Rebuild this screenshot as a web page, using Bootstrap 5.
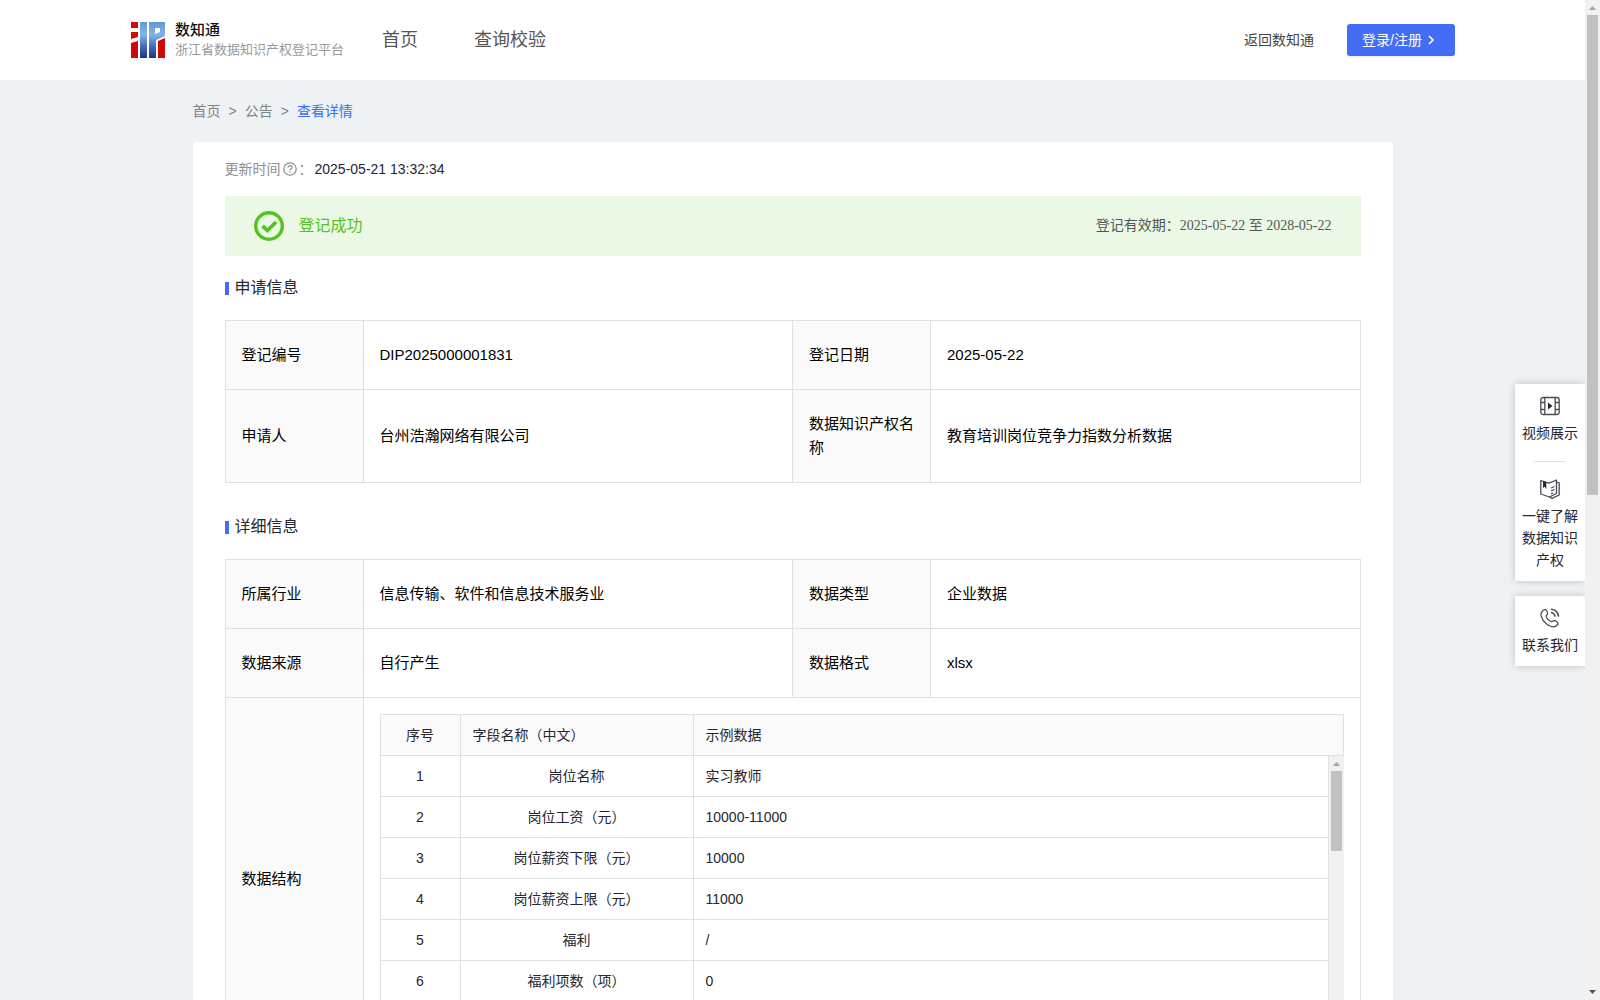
<!DOCTYPE html>
<html lang="zh-CN">
<head>
<meta charset="utf-8">
<meta name="viewport" content="width=device-width, initial-scale=1">
<title>数知通 - 查看详情</title>
<link href="https://cdn.jsdelivr.net/npm/bootstrap@5.3.0/dist/css/bootstrap.min.css" rel="stylesheet">
<style>
  body { font: 14px/22px "Liberation Sans", "Noto Sans CJK SC", sans-serif; color: #252632; background: #eef2f5; }
  a { text-decoration: none; }
  .page-scroll { overflow-y: auto; scrollbar-width: none; min-width: 0; }
  .page-scroll::-webkit-scrollbar, .rows-scroll::-webkit-scrollbar { display: none; }

  /* scroll bars */
  .sbar { width: 15px; background: #f1f1f1; flex: none; }
  .sbar svg { display: block; width: 15px; height: 15px; flex: none; }
  .sbar-thumb { width: 11px; background: #c1c1c1; margin: 0 2px; }
  .sbar-page .sbar-thumb { height: 48%; }
  .sbar-rows .sbar-thumb { height: 28%; }

  /* header */
  .topbar { height: 80px; background: #fff; }
  .topbar-inner { max-width: 1325px; }
  .brand { gap: 10px; }
  .brand-logo { width: 35px; height: 36px; }
  .brand-name { font-size: 15px; line-height: 20px; font-weight: 500; color: #111; }
  .brand-sub { font-size: 13px; line-height: 20px; color: #999; }
  .topnav { gap: 56px; margin-left: 38px; }
  .topnav a { font-size: 18px; line-height: 26px; color: #555; }
  .back-link { color: #444; margin-right: 33px; }
  .btn-login { background: #446df5; color: #fff; font-size: 14px; line-height: 22px; width: 108px; height: 32px; padding: 0 15px; border: 0; border-radius: 3px; box-shadow: 0 2px 0 rgba(0,0,0,.05); }
  .btn-login:hover { background: #3059e0; color: #fff; }

  /* breadcrumb and panel */
  .content-wrap { max-width: 1200px; }
  .crumbs { gap: 8px; padding: 20px 0; color: #808285; }
  .crumbs a { color: #808285; }
  .crumbs .here { color: #3c6df5; }
  .panel { background: #fff; border-radius: 4px; padding: 16px 32px 40px; }
  .update-row { gap: 2px; }
  .update-label { color: #8e8e93; }
  .status-bar { height: 60px; background: #ebf8e6; margin-top: 16px; padding: 0 29px; }
  .status-name { font-size: 16px; color: #52c41a; margin-left: 15px; }
  .validity { font-family: "Liberation Serif", "Noto Sans CJK SC", serif; color: #555; }
  .sec-title { font-size: 16px; line-height: 24px; margin: 20px 0 20px; font-weight: 400; gap: 6px; }
  .sec-title::before { content: ""; width: 4px; height: 13px; background: #446df5; }
  .info-grid + .sec-title { margin-top: 32px; }

  /* tables */
  .info-grid { width: 100%; table-layout: fixed; border-collapse: collapse; font-size: 15px; line-height: 24px; color: #000; }
  .info-grid > tbody > tr > th, .info-grid > tbody > tr > td { border: 1px solid #e0e0e0; padding: 22px 15px 22px 16px; }
  .info-grid > tbody > tr > th { background: #fafafa; font-weight: 400; }
  .info-grid > tbody > tr > td.nest-cell { padding: 16px; }
  .col-label { width: 138px; }
  .field-grid { width: 100%; table-layout: fixed; border-collapse: collapse; font-size: 14px; line-height: 22px; color: #252632; }
  .field-grid th, .field-grid td { border: 1px solid #e0e0e0; padding: 9px 12px; font-weight: 400; }
  .field-grid th { background: #fafafa; }
  .field-grid .c-no { width: 80px; text-align: center; }
  .field-grid .c-name { width: 233px; }
  .field-grid td.c-name { text-align: center; }
  .rows-frame { height: 287px; }
  .rows-scroll { overflow-y: auto; scrollbar-width: none; margin-top: -1px; }

  /* floating shortcuts */
  .side-tools { position: absolute; right: 15px; top: 384px; width: 70px; display: flex; flex-direction: column; gap: 15px; }
  .tool-box { background: #fff; padding: 12px 7px 10px; box-shadow: 0 0 8px rgba(0,0,0,.2); clip-path: inset(-10px 0 -10px -10px); }
  .tool-box a { color: #252632; display: flex; flex-direction: column; align-items: center; gap: 6px; text-align: center; }
  .tool-sep { width: 32px; height: 1px; background: #e0e0e0; margin: 17px auto; }
</style>
<script src="https://cdn.jsdelivr.net/npm/bootstrap@5.3.0/dist/js/bootstrap.bundle.min.js"></script>
</head>
<body>
<div class="d-flex vh-100 position-relative overflow-hidden">
  <div class="page-scroll flex-grow-1">

    <header class="topbar d-flex">
      <div class="topbar-inner d-flex align-items-center w-100 mx-auto">
        <a href="#" class="brand d-flex align-items-center">
          <svg class="brand-logo" viewBox="-1 0 35 36" aria-hidden="true">
            <defs><linearGradient id="lg" x1="0" y1="0" x2="0" y2="36" gradientUnits="userSpaceOnUse"><stop offset="0" stop-color="#6496d2"/><stop offset=".35" stop-color="#80b4ea"/><stop offset=".65" stop-color="#4a72bc"/><stop offset="1" stop-color="#1f3483"/></linearGradient></defs>
            <path fill="#d20808" d="M0 0h7v6H0zM0 10h7v5l-7 2zM0 21l7-2v17H0zM27 19l7-3v20h-7z"/>
            <path fill="url(#lg)" d="M9 0h7v36H9zM18 0h16v14l-9 4v18h-7zM24 6v6l5-2V6z" fill-rule="evenodd"/>
          </svg>
          <span class="d-flex flex-column">
            <span class="brand-name">数知通</span>
            <span class="brand-sub">浙江省数据知识产权登记平台</span>
          </span>
        </a>
        <nav class="topnav d-flex">
          <a href="#">首页</a>
          <a href="#">查询校验</a>
        </nav>
        <a href="#" class="back-link ms-auto">返回数知通</a>
        <button type="button" class="btn btn-login d-flex align-items-center">登录/注册
          <svg class="ms-1" width="10" height="10" viewBox="0 0 10 10" fill="none" stroke="#fff" stroke-width="1.6" aria-hidden="true"><path d="M3 1l4 4-4 4"/></svg>
        </button>
      </div>
    </header>

    <main class="content-wrap mx-auto">
      <nav class="crumbs d-flex" aria-label="breadcrumb">
        <a href="#">首页</a><span>&gt;</span><a href="#">公告</a><span>&gt;</span><a href="#" class="here" aria-current="page">查看详情</a>
      </nav>

      <section class="panel">
        <div class="update-row d-flex align-items-center">
          <span class="update-label">更新时间</span>
          <svg width="14" height="14" viewBox="0 0 14 14" fill="none" stroke="#8e8e93" stroke-width="1.2" aria-hidden="true"><circle cx="7" cy="7" r="6.2"/><path d="M5 5.6c0-2.6 4-2.4 4-.1C9 6.9 7 6.9 7 8.4M7 9.4v1.3"/></svg>
          <span class="update-label">：</span>
          <span>2025-05-21 13:32:34</span>
        </div>

        <div class="status-bar d-flex align-items-center">
          <svg width="30" height="30" viewBox="0 0 30 30" fill="none" stroke="#52c41a" aria-hidden="true"><circle cx="15" cy="15" r="13.3" stroke-width="3.4"/><path d="M8.500 15l5 4.500 8.500-8.500" stroke-width="3.800"/></svg>
          <span class="status-name">登记成功</span>
          <span class="validity ms-auto">登记有效期：2025-05-22 至 2028-05-22</span>
        </div>

        <h2 class="sec-title d-flex align-items-center">申请信息</h2>
        <table class="info-grid">
          <colgroup><col class="col-label"><col><col class="col-label"><col></colgroup>
          <tbody>
            <tr><th scope="row">登记编号</th><td>DIP2025000001831</td><th scope="row">登记日期</th><td>2025-05-22</td></tr>
            <tr><th scope="row">申请人</th><td>台州浩瀚网络有限公司</td><th scope="row">数据知识产权名称</th><td>教育培训岗位竞争力指数分析数据</td></tr>
          </tbody>
        </table>

        <h2 class="sec-title d-flex align-items-center">详细信息</h2>
        <table class="info-grid">
          <colgroup><col class="col-label"><col><col class="col-label"><col></colgroup>
          <tbody>
            <tr><th scope="row">所属行业</th><td>信息传输、软件和信息技术服务业</td><th scope="row">数据类型</th><td>企业数据</td></tr>
            <tr><th scope="row">数据来源</th><td>自行产生</td><th scope="row">数据格式</th><td>xlsx</td></tr>
            <tr>
              <th scope="row">数据结构</th>
              <td colspan="3" class="nest-cell">
                <table class="field-grid">
                  <thead><tr><th class="c-no" scope="col">序号</th><th class="c-name" scope="col">字段名称（中文）</th><th scope="col">示例数据</th></tr></thead>
                </table>
                <div class="rows-frame d-flex">
                  <div class="rows-scroll flex-grow-1">
                    <table class="field-grid">
                      <tbody>
                        <tr><td class="c-no">1</td><td class="c-name">岗位名称</td><td>实习教师</td></tr>
                        <tr><td class="c-no">2</td><td class="c-name">岗位工资（元）</td><td>10000-11000</td></tr>
                        <tr><td class="c-no">3</td><td class="c-name">岗位薪资下限（元）</td><td>10000</td></tr>
                        <tr><td class="c-no">4</td><td class="c-name">岗位薪资上限（元）</td><td>11000</td></tr>
                        <tr><td class="c-no">5</td><td class="c-name">福利</td><td>/</td></tr>
                        <tr><td class="c-no">6</td><td class="c-name">福利项数（项）</td><td>0</td></tr>
                      </tbody>
                    </table>
                  </div>
                  <div class="sbar sbar-rows d-flex flex-column" aria-hidden="true">
                    <svg viewBox="0 0 15 15"><path fill="#a3a3a3" d="M4 10h7L7.500 6z"/></svg>
                    <div class="sbar-thumb"></div>
                  </div>
                </div>
              </td>
            </tr>
          </tbody>
        </table>
      </section>
    </main>
  </div>

  <div class="sbar sbar-page d-flex flex-column" aria-hidden="true">
    <svg viewBox="0 0 15 15"><path fill="#a3a3a3" d="M4 10h7L7.500 6z"/></svg>
    <div class="sbar-thumb"></div>
    <svg class="mt-auto" viewBox="0 0 15 15"><path fill="#505050" d="M4 5h7L7.500 9z"/></svg>
  </div>

  <aside class="side-tools">
    <div class="tool-box">
      <a href="#">
        <svg width="20" height="20" viewBox="0 0 20 20" fill="none" stroke="#4a4b55" stroke-width="1.300" aria-hidden="true"><rect x=".8" y="1.500" width="18.400" height="17" rx="2.500"/><path d="M4.800 2v16M15.200 2v16M1 6.500h3.800M1 13.500h3.800M15.200 6.500H19M15.200 13.500H19"/><path d="M8 6.500v7l4.500-3.500z" fill="#252632" stroke="none"/></svg>
        <span>视频展示</span>
      </a>
      <div class="tool-sep"></div>
      <a href="#">
        <svg width="20" height="20" viewBox="0 0 20 20" fill="none" stroke="#4a4b55" stroke-width="1.300" stroke-linejoin="round" aria-hidden="true"><path d="M.8 1.500 9 4.200 16.500 1v13.500L9.500 18 .8 15z"/><path d="M16.500 3 19.200 3.800V16L12 19.300 9.500 18M11 9l3.500-1.500M11 12l3.500-1.500M11 15l2-1"/><path d="M3 2v7l1.700-1.200L6.300 10V3.200z" fill="#252632" stroke="none"/></svg>
        <span>一键了解数据知识产权</span>
      </a>
    </div>
    <div class="tool-box">
      <a href="#">
        <svg width="20" height="20" viewBox="0 0 20 20" fill="none" stroke="#4a4b55" stroke-width="1.200" stroke-linecap="round" stroke-linejoin="round" aria-hidden="true"><path d="M3 2.500C5 .8 6 1.500 7.200 3.800c1 2 .3 2.700-.8 3.700-.8.900 1 3.500 2.300 4.500 1.300 1.200 2.700 2 3.500 1.500 1.300-1 2.300-1.400 3.800-.4 2 1.400 2.500 2.400 1.200 3.900-1.700 2-4.200 2.400-7.200 1C5.800 16 2.300 12 1.200 8 .6 5.500 1.200 4 3 2.500z"/><path d="M11.500 4.500c1.800.5 3 1.700 3.500 3.500M11.500 1.200c3.600.4 6.300 3 7 6.800" stroke-width="1.600"/></svg>
        <span>联系我们</span>
      </a>
    </div>
  </aside>
</div>
</body>
</html>
